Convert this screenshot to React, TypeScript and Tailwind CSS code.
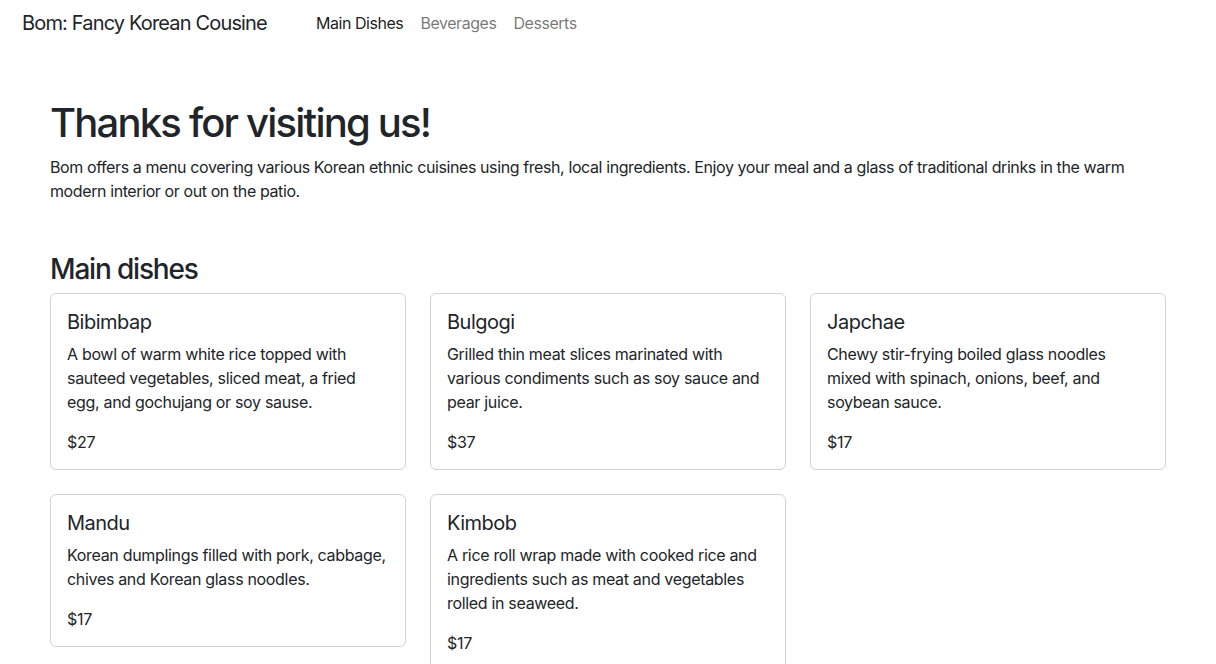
const dishes = [
  {
    name: "Bibimbap",
    text: "A bowl of warm white rice topped with sauteed vegetables, sliced meat, a fried egg, and gochujang or soy sause.",
    price: "$27",
  },
  {
    name: "Bulgogi",
    text: "Grilled thin meat slices marinated with various condiments such as soy sauce and pear juice.",
    price: "$37",
  },
  {
    name: "Japchae",
    text: "Chewy stir-frying boiled glass noodles mixed with spinach, onions, beef, and soybean sauce.",
    price: "$17",
  },
  {
    name: "Mandu",
    text: "Korean dumplings filled with pork, cabbage, chives and Korean glass noodles.",
    price: "$17",
  },
  {
    name: "Kimbob",
    text: "A rice roll wrap made with cooked rice and ingredients such as meat and vegetables rolled in seaweed.",
    price: "$17",
  },
]

function DishCard({ name, text, price }: { name: string; text: string; price: string }) {
  return (
    <div className="rounded-md border border-black/[0.175] px-4 pt-4 pb-[15px]">
      <h5 className="mb-2 text-[20px] leading-[1.2] tracking-[-0.025em]">{name}</h5>
      <p className="mb-4 text-base leading-6 tracking-[-0.02em]">{text}</p>
      <p className="text-base leading-6 tracking-[-0.02em]">{price}</p>
    </div>
  )
}

export default function App() {
  return (
    <div className="min-h-screen bg-white text-[#212529]" style={{ fontFamily: "Inter, 'Noto Sans', sans-serif" }}>
      <nav className="flex items-center px-[22px] pt-2 pb-2">
        <a href="#" className="text-[20px] leading-[30px] tracking-[-0.042em]">
          Bom: Fancy Korean Cousine
        </a>
        <div className="ml-[49px] flex items-center gap-[17px] text-base leading-[30px] tracking-[-0.028em]">
          <a href="#" className="text-black/90">
            Main Dishes
          </a>
          <a href="#" className="text-black/55">
            Beverages
          </a>
          <a href="#" className="text-black/55">
            Desserts
          </a>
        </div>
      </nav>

      <main className="mx-auto max-w-[1140px] px-3 pt-[53px]">
        <h1 className="mb-2 text-[40px] font-medium leading-[1.2] tracking-[-0.045em]">Thanks for visiting us!</h1>
        <p className="text-base leading-6 tracking-[-0.025em]">
          Bom offers a menu covering various Korean ethnic cuisines using fresh, local ingredients. Enjoy your meal and
          a glass of traditional drinks in the warm modern interior or out on the patio.
        </p>

        <section className="mt-[50px]">
          <h3 className="mb-[6px] text-[28px] font-medium leading-[1.2] tracking-[-0.042em]">Main dishes</h3>
          <div className="grid grid-cols-3 items-start gap-x-6 gap-y-6">
            {dishes.map((d) => (
              <DishCard key={d.name} {...d} />
            ))}
          </div>
        </section>
      </main>
    </div>
  )
}
